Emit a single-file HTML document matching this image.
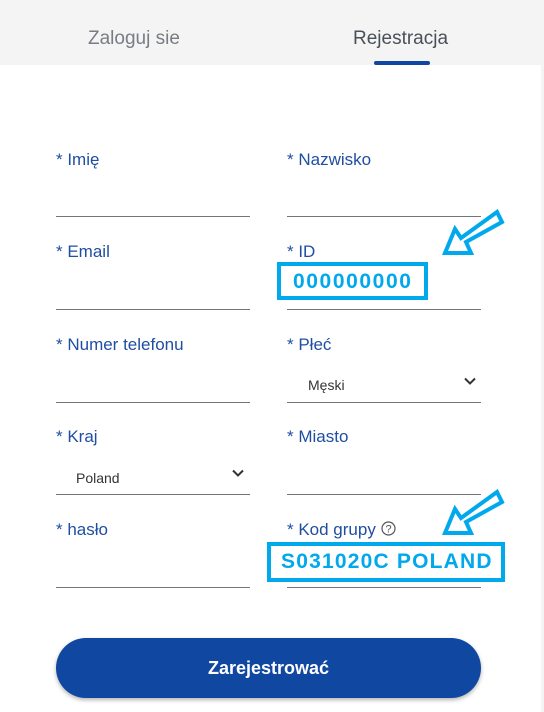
<!DOCTYPE html>
<html><head><meta charset="utf-8"><style>
*{margin:0;padding:0;box-sizing:border-box}
body{width:544px;height:712px;background:#fff;font-family:"Liberation Sans",sans-serif;position:relative;overflow:hidden}
.hdr{position:absolute;left:0;top:0;width:544px;height:65px;background:#f4f4f4}
.tab{position:absolute;top:28px;font-size:19px}
.ul{position:absolute;left:374px;top:61px;width:56px;height:4px;background:#0f47a1;border-radius:2px}
.rs{position:absolute;right:0;top:65px;width:3px;height:647px;background:#f4f4f4}
.lbl{position:absolute;font-size:17px;color:#1f4ea3}
.line{position:absolute;height:1px;background:#6f767c;width:194px}
.sel{position:absolute;font-size:14px;color:#333}
.chev{position:absolute}
.box{position:absolute;border:4px solid #00a8ec;color:#00a8ec;font-weight:bold;font-size:21px;background:#fff}
.btn{position:absolute;left:56px;top:638px;width:425px;height:60px;border-radius:30px;background:#0f47a1;color:#fff;font-weight:bold;font-size:18px;text-align:center;line-height:60px;box-shadow:0 2px 4px rgba(0,0,0,.3)}
</style></head><body>
<div class="hdr"></div>
<div class="tab" style="left:88px;color:#777d83">Zaloguj sie</div>
<div class="tab" style="left:353px;color:#4a5058">Rejestracja</div>
<div class="ul"></div>
<div class="rs"></div>

<div class="lbl" style="left:56px;top:150px">* Imię</div>
<div class="lbl" style="left:287px;top:150px">* Nazwisko</div>
<div class="line" style="left:56px;top:216px"></div>
<div class="line" style="left:287px;top:216px"></div>

<div class="lbl" style="left:56px;top:242px">* Email</div>
<div class="lbl" style="left:287px;top:242px">* ID</div>
<div class="line" style="left:56px;top:309px"></div>
<div class="line" style="left:287px;top:309px"></div>
<div class="box" style="left:277px;top:262px;width:151px;height:38px;padding-left:12px;line-height:32px;letter-spacing:1.6px">000000000</div>

<div class="lbl" style="left:56px;top:335px">* Numer telefonu</div>
<div class="lbl" style="left:287px;top:335px">* Płeć</div>
<div class="sel" style="left:308px;top:377px">Męski</div>
<svg class="chev" style="left:464px;top:377px" width="12" height="9"><path d="M1 1.5L6 6.5L11 1.5" fill="none" stroke="#333" stroke-width="2"/></svg>
<div class="line" style="left:56px;top:402px"></div>
<div class="line" style="left:287px;top:402px"></div>

<div class="lbl" style="left:56px;top:427px">* Kraj</div>
<div class="lbl" style="left:287px;top:427px">* Miasto</div>
<div class="sel" style="left:76px;top:470px">Poland</div>
<svg class="chev" style="left:232px;top:469px" width="12" height="9"><path d="M1 1.5L6 6.5L11 1.5" fill="none" stroke="#333" stroke-width="2"/></svg>
<div class="line" style="left:56px;top:494px"></div>
<div class="line" style="left:287px;top:494px"></div>

<div class="lbl" style="left:56px;top:520px">* hasło</div>
<div class="lbl" style="left:287px;top:520px">* Kod grupy <svg width="15" height="15" style="vertical-align:-1px"><circle cx="7.5" cy="7.5" r="6.5" fill="none" stroke="#555" stroke-width="1.2"/><text x="7.5" y="11.5" font-size="11" text-anchor="middle" fill="#555" font-family="Liberation Sans">?</text></svg></div>
<div class="line" style="left:56px;top:587px"></div>
<div class="line" style="left:287px;top:587px"></div>
<div class="box" style="left:267px;top:542px;width:238px;height:40px;padding-left:10px;line-height:32px;letter-spacing:1.2px">S031020C POLAND</div>

<svg style="position:absolute;left:440px;top:208px" width="66" height="54"><polygon points="57,4 62,14 26,34 31,45 5,45 15,21 21,30" fill="none" stroke="#00a8ec" stroke-width="4" stroke-linejoin="miter"/></svg>
<svg style="position:absolute;left:440px;top:488px" width="66" height="54"><polygon points="57,4 62,14 26,34 31,45 5,45 15,21 21,30" fill="none" stroke="#00a8ec" stroke-width="4" stroke-linejoin="miter"/></svg>

<div class="btn">Zarejestrować</div>
</body></html>
